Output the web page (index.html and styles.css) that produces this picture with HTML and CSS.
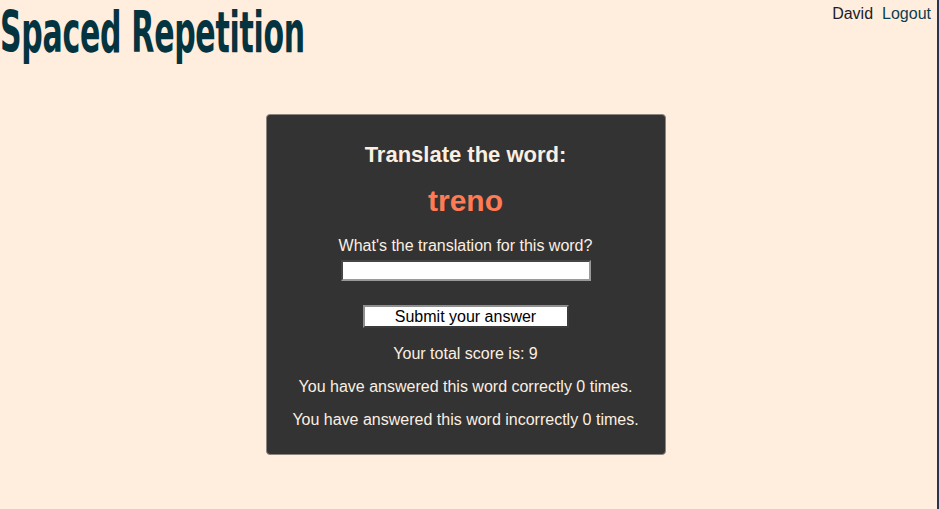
FILE: index.html
```html
<!DOCTYPE html>
<html>
<head>
<meta charset="utf-8">
<link rel="stylesheet" href="styles.css">
</head>
<body>
<div class="page">
  <header class="header">
    <h1 class="logo"><span class="logo-text">Spaced Repetition</span></h1>
    <nav class="nav">
      <span class="user">David</span>
      <a class="logout" href="#">Logout</a>
    </nav>
  </header>
  <main class="main">
    <section class="card">
      <h2 class="card-title">Translate the word:</h2>
      <div class="word">treno</div>
      <form class="form">
        <label class="label" for="answer">What's the translation for this word?</label>
        <input class="input" id="answer" type="text">
        <button class="submit" type="button">Submit your answer</button>
      </form>
      <p class="stat stat-first">Your total score is: 9</p>
      <p class="stat">You have answered this word correctly 0 times.</p>
      <p class="stat">You have answered this word incorrectly 0 times.</p>
    </section>
  </main>
</div>
</body>
</html>
```
FILE: styles.css
```css
html, body {
  margin: 0;
  padding: 0;
}
body {
  background: #ffeddd;
  font-family: "Liberation Sans", Arial, sans-serif;
  height: 509px;
  overflow: hidden;
  border-right: 2px solid #2a3550;
  box-sizing: border-box;
}
.page {
  padding-right: 6px;
}
.header {
  display: flex;
  justify-content: space-between;
  align-items: flex-start;
}
.logo {
  margin: 0;
  font-family: "DejaVu Sans Condensed", "Liberation Sans", sans-serif;
  font-weight: 700;
  font-size: 57px;
  line-height: 64px;
  color: #053441;
}
.logo-text {
  display: inline-block;
  transform-origin: 0 0;
  transform: scaleX(0.585);
  letter-spacing: -0.5px;
  margin-top: -5px;
}
.nav {
  font-size: 16px;
  line-height: 18px;
  padding-top: 5px;
  display: flex;
  gap: 9px;
}
.user {
  color: #1c1c2a;
}
.logout {
  color: #0b3e4e;
  text-decoration: none;
}
.main {
  display: flex;
  justify-content: center;
  padding-top: 50px;
}
.card {
  width: 398px;
  background: #333333;
  border: 1px solid #8a8580;
  border-radius: 4px;
  padding: 28px 0 25px;
  text-align: center;
  color: #fbefe2;
}
.card-title {
  margin: 0;
  font-size: 22px;
  line-height: 24px;
  font-weight: 700;
}
.word {
  margin-top: 18px;
  font-size: 30px;
  line-height: 32px;
  font-weight: 700;
  color: #ff7b55;
}
.form {
  margin-top: 20px;
  display: flex;
  flex-direction: column;
  align-items: center;
}
.label {
  font-size: 16px;
  line-height: 18px;
}
.input {
  margin-top: 5px;
  width: 250px;
  height: 21px;
  box-sizing: border-box;
  border: 2px inset #9a9a9a;
  background: #fff;
  padding: 0;
}
.submit {
  margin-top: 24px;
  width: 206px;
  height: 23px;
  box-sizing: border-box;
  background: #fff;
  border: 2px outset #8f8f8f;
  font-family: "Liberation Sans", Arial, sans-serif;
  font-size: 16px;
  line-height: 18px;
  color: #000;
  padding: 0;
}
.stat {
  margin: 15px 0 0;
  font-size: 16px;
  line-height: 18px;
}
.stat-first {
  margin-top: 17px;
}
```
